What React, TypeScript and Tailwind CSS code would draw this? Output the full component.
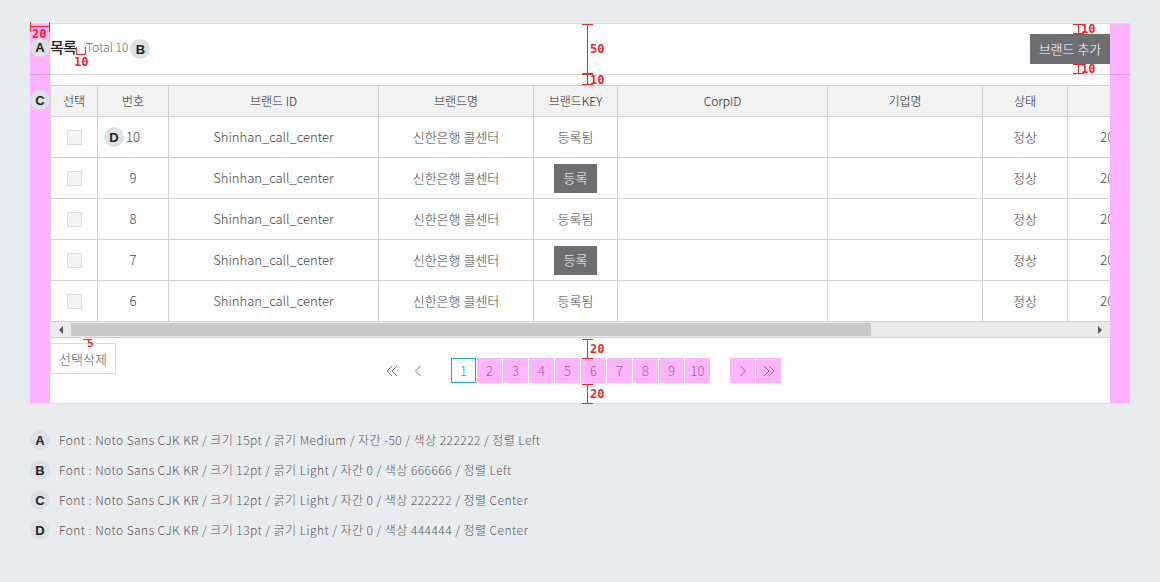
const rows = [
    { no: 10, keyDone: true, badge: true },
    { no: 9, keyDone: false },
    { no: 8, keyDone: true },
    { no: 7, keyDone: false },
    { no: 6, keyDone: true },
];

const columns = [
    { label: "선택", width: 47 },
    { label: "번호", width: 71 },
    { label: "브랜드 ID", width: 210 },
    { label: "브랜드명", width: 155 },
    { label: "브랜드KEY", width: 84 },
    { label: "CorpID", width: 210 },
    { label: "기업명", width: 155 },
    { label: "상태", width: 85 },
    { label: "등록일", width: 130 },
];

const legend = [
    { mark: "A", text: "Font : Noto Sans CJK KR / 크기 15pt / 굵기 Medium / 자간 -50 / 색상 222222 / 정렬 Left" },
    { mark: "B", text: "Font : Noto Sans CJK KR / 크기 12pt / 굵기 Light / 자간 0 / 색상 666666 / 정렬 Left" },
    { mark: "C", text: "Font : Noto Sans CJK KR / 크기 12pt / 굵기 Light / 자간 0 / 색상 222222 / 정렬 Center" },
    { mark: "D", text: "Font : Noto Sans CJK KR / 크기 13pt / 굵기 Light / 자간 0 / 색상 444444 / 정렬 Center" },
];

function Badge({ mark }: { mark: string }) {
    return (
        <span className="relative z-10 inline-flex h-[20px] w-[20px] shrink-0 items-center justify-center rounded-full bg-[#dde1e6] font-['Liberation_Sans',sans-serif] text-[13px] font-bold leading-none text-[#222]">
            {mark}
        </span>
    );
}

// red spacing marks laid over the design
function VMark({ left, top, height, label }: { left: number; top: number; height: number; label: string }) {
    return (
        <div className="pointer-events-none absolute z-20" style={{ left, top, height }}>
            <div className="absolute left-[-5px] top-0 h-px w-[11px] bg-[#f0242a]" />
            <div className="absolute left-0 top-0 h-full w-px bg-[#f0242a]" />
            <div className="absolute bottom-0 left-[-5px] h-px w-[11px] bg-[#f0242a]" />
            <span className="absolute left-[3px] top-1/2 -translate-y-1/2 font-['DejaVu_Sans_Mono',monospace] text-[12px] font-bold leading-none text-[#f0242a]">
                {label}
            </span>
        </div>
    );
}

function DoubleChevron({ dir }: { dir: "left" | "right" }) {
    return (
        <svg width="12" height="12" viewBox="0 0 12 12" fill="none" stroke="currentColor" strokeWidth="1">
            {dir === "left" ? (
                <path d="M6 1 1 6l5 5M11 1 6 6l5 5" />
            ) : (
                <path d="M1 1l5 5-5 5M6 1l5 5-5 5" />
            )}
        </svg>
    );
}

function Chevron({ dir }: { dir: "left" | "right" }) {
    return (
        <svg width="8" height="12" viewBox="0 0 8 12" fill="none" stroke="currentColor" strokeWidth="1">
            {dir === "left" ? <path d="M6.5 1 1.5 6l5 5" /> : <path d="M1.5 1l5 5-5 5" />}
        </svg>
    );
}

export default function App() {
    return (
        <div className="min-h-[582px] bg-[#e9ecef] px-[30px] pt-[23px] font-['Noto_Sans_CJK_KR',sans-serif]">
            <div className="relative w-[1100px] border-y border-[#d9dcdf] bg-white">
                {/* padding indicators */}
                <div className="pointer-events-none absolute inset-y-0 left-0 z-[5] w-[20px] bg-[rgba(255,0,255,0.3)]" />
                <div className="pointer-events-none absolute inset-y-0 right-0 z-[5] w-[20px] bg-[rgba(255,0,255,0.3)]" />

                <VMark left={557} top={0} height={50} label="50" />
                <VMark left={557} top={50} height={11} label="10" />
                <VMark left={1048} top={0} height={10} label="10" />
                <VMark left={1048} top={40} height={10} label="10" />
                <VMark left={557} top={315} height={20} label="20" />
                <VMark left={557} top={360} height={20} label="20" />
                <div className="pointer-events-none absolute left-0 top-[-2px] z-20 h-[10px] w-[20px]">
                    <div className="absolute left-0 top-0 h-full w-px bg-[#f0242a]" />
                    <div className="absolute right-0 top-0 h-full w-px bg-[#f0242a]" />
                    <div className="absolute left-0 top-[4px] h-px w-full bg-[#f0242a]" />
                    <span className="absolute left-[2px] top-[6px] font-['DejaVu_Sans_Mono',monospace] text-[12px] font-bold leading-none text-[#f0242a]">20</span>
                </div>
                <div className="pointer-events-none absolute left-[46px] top-[23px] z-20 h-[8px] w-[10px]">
                    <div className="absolute left-0 top-0 h-full w-px bg-[#f0242a]" />
                    <div className="absolute right-0 top-0 h-full w-px bg-[#f0242a]" />
                    <div className="absolute bottom-0 left-0 h-px w-full bg-[#f0242a]" />
                    <span className="absolute left-[-2px] top-[9px] font-['DejaVu_Sans_Mono',monospace] text-[12px] font-bold leading-none text-[#f0242a]">10</span>
                </div>
                <div className="pointer-events-none absolute left-[53px] top-[315px] z-20">
                    <div className="h-px w-[9px] bg-[#f0242a]" />
                    <span className="absolute left-[4px] top-[-1px] font-['DejaVu_Sans_Mono',monospace] text-[11px] font-bold leading-none text-[#f0242a]">5</span>
                </div>

                {/* header */}
                <div className="flex h-[51px] items-center justify-between border-b border-[#d9dcdf] pr-[20px]">
                    <div className="flex items-center pb-[4px]">
                        <div className="flex w-[20px] justify-center">
                            <Badge mark="A" />
                        </div>
                        <span className="text-[15px] font-medium tracking-[-0.05em] text-[#222]">목록</span>
                        <span className="ml-[10px] text-[12px] font-light text-[#666]">Total 10</span>
                        <span className="ml-[2px]">
                            <Badge mark="B" />
                        </span>
                    </div>
                    <button className="h-[30px] w-[80px] bg-[#6d6e72] text-[13px] font-light text-white">브랜드 추가</button>
                </div>

                {/* table */}
                <div className="mt-[10px] flex">
                    <div className="flex w-[20px] justify-center pt-[5px]">
                        <Badge mark="C" />
                    </div>
                    <div className="w-[1060px] overflow-hidden">
                        <table className="w-[1147px] table-fixed border-collapse">
                            <colgroup>
                                {columns.map((c) => (
                                    <col key={c.label} style={{ width: c.width }} />
                                ))}
                            </colgroup>
                            <thead>
                                <tr className="h-[31px] bg-[#f2f2f2]">
                                    {columns.map((c) => (
                                        <th key={c.label} className="border border-[#d1d1d1] p-0 text-center text-[12px] font-light text-[#222]">
                                            {c.label}
                                        </th>
                                    ))}
                                </tr>
                            </thead>
                            <tbody>
                                {rows.map((r) => (
                                    <tr key={r.no} className="h-[41px]">
                                        <td className="border border-[#d1d1d1] p-0">
                                            <div className="mx-auto h-[15px] w-[15px] border border-[#dcdcdc] bg-[#f4f4f4]" />
                                        </td>
                                        <td className="border border-[#d1d1d1] p-0 text-center text-[13px] font-light text-[#444]">
                                            <span className="relative inline-block">
                                                {r.badge && (
                                                    <span className="absolute right-full top-1/2 mr-[2px] flex -translate-y-1/2">
                                                        <Badge mark="D" />
                                                    </span>
                                                )}
                                                {r.no}
                                            </span>
                                        </td>
                                        <td className="border border-[#d1d1d1] p-0 text-center text-[13px] font-light text-[#444]">Shinhan_call_center</td>
                                        <td className="border border-[#d1d1d1] p-0 text-center text-[13px] font-light text-[#444]">신한은행 콜센터</td>
                                        <td className="border border-[#d1d1d1] p-0 text-center text-[13px] font-light text-[#444]">
                                            {r.keyDone ? (
                                                "등록됨"
                                            ) : (
                                                <span className="inline-flex h-[29px] w-[43px] items-center justify-center bg-[#6d6e72] text-white">등록</span>
                                            )}
                                        </td>
                                        <td className="border border-[#d1d1d1] p-0" />
                                        <td className="border border-[#d1d1d1] p-0" />
                                        <td className="border border-[#d1d1d1] p-0 text-center text-[13px] font-light text-[#444]">정상</td>
                                        <td className="border border-[#d1d1d1] p-0 text-center text-[13px] font-light text-[#444]">2024-01-15</td>
                                    </tr>
                                ))}
                            </tbody>
                        </table>
                        {/* horizontal scrollbar */}
                        <div className="flex h-[16px] items-center border-b border-[#cfcfcf] bg-[#ebebeb]">
                            <div className="flex h-full w-[21px] items-center justify-center">
                                <div className="h-0 w-0 border-y-[4px] border-r-[4px] border-y-transparent border-r-[#555]" />
                            </div>
                            <div className="h-[13px] w-[800px] bg-[#c8c8c8]" />
                            <div className="flex-1" />
                            <div className="flex h-full w-[21px] items-center justify-center">
                                <div className="h-0 w-0 border-y-[4px] border-l-[4px] border-y-transparent border-l-[#555]" />
                            </div>
                        </div>
                    </div>
                </div>

                {/* footer */}
                <div className="grid grid-cols-[1fr_auto_1fr] px-[20px]">
                    <div className="pt-[5px]">
                        <button className="h-[31px] w-[66px] border border-[#dadada] bg-white text-[13px] font-light text-[#555]">선택삭제</button>
                    </div>
                    <div className="flex items-center py-[20px] text-[13px] font-light">
                        <span className="flex h-[25px] w-[26px] items-center justify-center text-[#777]">
                            <DoubleChevron dir="left" />
                        </span>
                        <span className="flex h-[25px] w-[26px] items-center justify-center text-[#777]">
                            <Chevron dir="left" />
                        </span>
                        <div className="ml-[20px] flex gap-px">
                            <span className="flex h-[25px] w-[25px] items-center justify-center border border-[#1ea7c5] text-[#1ea7c5]">1</span>
                            {[2, 3, 4, 5, 6, 7, 8, 9, 10].map((n) => (
                                <span key={n} className="flex h-[25px] w-[25px] items-center justify-center bg-[#fdb5fd] text-[#946494]">
                                    {n}
                                </span>
                            ))}
                        </div>
                        <div className="ml-[20px] flex gap-px">
                            <span className="flex h-[25px] w-[25px] items-center justify-center bg-[#fdb5fd] text-[#946494]">
                                <Chevron dir="right" />
                            </span>
                            <span className="flex h-[25px] w-[25px] items-center justify-center bg-[#fdb5fd] text-[#946494]">
                                <DoubleChevron dir="right" />
                            </span>
                        </div>
                    </div>
                    <div />
                </div>
            </div>

            {/* legend */}
            <div className="mt-[26px] flex flex-col gap-[10px]">
                {legend.map((l) => (
                    <div key={l.mark} className="flex h-[20px] items-center gap-[9px]">
                        <Badge mark={l.mark} />
                        <span className="text-[12px] font-light tracking-[0.45px] text-[#555]">{l.text}</span>
                    </div>
                ))}
            </div>
        </div>
    );
}
